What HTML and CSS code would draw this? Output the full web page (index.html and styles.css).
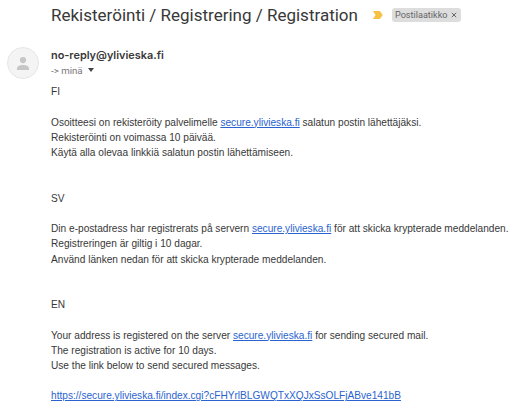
FILE: index.html
```
<!DOCTYPE html>
<html lang="fi">
<head>
  <meta charset="UTF-8" />
  <meta name="viewport" content="width=device-width, initial-scale=1" />
  <title>Rekisteröinti / Registrering / Registration</title>
  <link rel="stylesheet" href="styles.css">
</head>
<body>
  <header class="subject">
    <h1>Rekisteröinti / Registrering / Registration</h1>
    <svg class="important" viewBox="0 0 10 8" aria-hidden="true">
      <path d="M.8 0H6.2Q7 0 7.5.7L9.7 4 7.5 7.3Q7 8 6.2 8H.8Q-.1 8 .5 7.1L2.6 4 .5.9Q-.1 0 .8 0Z" fill="#f6c243" />
    </svg>
    <span class="label">
      <span class="label-name">Postilaatikko</span>
      <svg class="label-close" viewBox="0 0 6 6" aria-hidden="true">
        <path d="M.8.8 5.2 5.2M5.2.8.8 5.2" stroke="#666" stroke-width="1" />
      </svg>
    </span>
  </header>

  <main class="message">
    <div class="avatar">
      <svg viewBox="0 0 12 13" aria-hidden="true">
        <circle cx="6" cy="3.1" r="3.1" fill="#c6c6c6" />
        <path d="M0 13v-1.7C0 9 3.2 7.900 6 7.900s6 1.100 6 3.400V13Z" fill="#c6c6c6" />
      </svg>
    </div>
    <div class="content">
      <div class="sender">no-reply@ylivieska.fi</div>
      <div class="recipient">
        <span>-&gt; minä</span>
        <span class="arrow"></span>
      </div>

      <div class="mail-body">
        <p>FI</p>
        <p>
          Osoitteesi on rekisteröity palvelimelle <a href="#">secure.ylivieska.fi</a> salatun postin lähettäjäksi.<br>
          Rekisteröinti on voimassa 10 päivää.<br>
          Käytä alla olevaa linkkiä salatun postin lähettämiseen.
        </p>
        <p class="lang">SV</p>
        <p>
          Din e-postadress har registrerats på servern <a href="#">secure.ylivieska.fi</a> för att skicka krypterade meddelanden.<br>
          Registreringen är giltig i 10 dagar.<br>
          Använd länken nedan för att skicka krypterade meddelanden.
        </p>
        <p class="lang">EN</p>
        <p>
          Your address is registered on the server <a href="#">secure.ylivieska.fi</a> for sending secured mail.<br>
          The registration is active for 10 days.<br>
          Use the link below to send secured messages.
        </p>
        <p><a href="#">https://secure.ylivieska.fi/index.cgi?cFHYrlBLGWQTxXQJxSsOLFjABve141bB</a></p>
      </div>
    </div>
  </main>
</body>
</html>
```

FILE: styles.css
```
:root {
  --text-color: #383838;
  --muted-color: #777;
  --link-color: #2a63cf;
}
* {
  box-sizing: border-box;
}
body {
  margin: 0;
  background: #fff;
  color: var(--text-color);
  font-family: "Liberation Sans", Arial, sans-serif;
}
.subject {
  display: flex;
  align-items: center;
  height: 30px;
  padding-left: 51px;
  white-space: nowrap;
}
.subject h1 {
  width: 322px;
  margin: 0;
  font-family: Roboto, sans-serif;
  font-size: 17px;
  font-weight: 400;
}
.important {
  width: 10px;
  height: 8px;
}
.label {
  display: flex;
  align-items: center;
  justify-content: space-between;
  width: 69px;
  height: 14px;
  margin-left: 9px;
  padding: 0 4px 0 3px;
  border-radius: 3px;
  background: #ddd;
  color: #666;
}
.label-name {
  font-family: Roboto, sans-serif;
  font-size: 9.1px;
}
.label-close {
  width: 6px;
  height: 6px;
}
.message {
  display: flex;
  padding: 17px 0 0 7px;
}
.avatar {
  display: flex;
  align-items: center;
  justify-content: center;
  flex: none;
  width: 32px;
  height: 32px;
  border: 1px solid #e6e6e6;
  border-radius: 50%;
  background: #f4f4f4;
}
.avatar svg {
  width: 12px;
  height: 13px;
}
.content {
  padding-left: 12px;
  white-space: nowrap;
}
.sender {
  font-family: Inter, sans-serif;
  font-size: 10.9px;
  font-weight: 600;
  line-height: 16px;
}
.recipient {
  display: flex;
  align-items: center;
  gap: 5px;
  height: 14px;
  color: var(--muted-color);
  font-family: Roboto, sans-serif;
  font-size: 9.7px;
}
.arrow {
  border: 3.5px solid transparent;
  border-top: 4px solid #444;
  border-bottom: 0;
}
.mail-body {
  margin-top: 7.4px;
  font-size: 10.14px;
  line-height: 15.2px;
}
.mail-body p {
  margin: 0 0 15.2px;
}
.mail-body .lang {
  margin-top: 30.4px;
}
a {
  color: var(--link-color);
}
```
